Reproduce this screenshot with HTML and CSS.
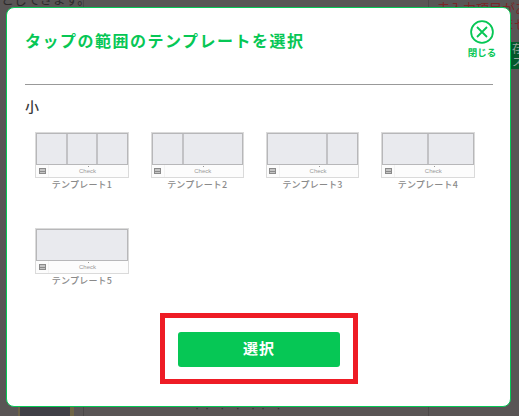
FILE: index.html
```html
<!DOCTYPE html>
<html lang="ja">
<head>
<meta charset="utf-8">
<title>テンプレート選択</title>
<link rel="stylesheet" href="styles.css">
</head>
<body>
<div class="backdrop">
  <div class="bg-left">
    <p class="bg-note">とじてきます。</p>
    <div class="bg-photo"></div>
  </div>
  <div class="bg-center">
    <p class="bg-foot">・・ ・ ・ ・・ ・</p>
  </div>
  <div class="bg-right">
    <p class="bg-alert">未入力項目があります<br>てくださいませ。入力</p>
    <div class="bg-save">存<br>ス</div>
  </div>
</div>
<section class="modal">
  <header class="modal-head">
    <h1 class="modal-title">タップの範囲のテンプレートを選択</h1>
    <button class="close" type="button">
      <svg class="close-icon" viewBox="0 0 24 24" width="24" height="24" aria-hidden="true">
        <circle cx="12" cy="12" r="10.9" fill="none" stroke="#06c755" stroke-width="1.8"/>
        <path d="M7 7 L17 17 M17 7 L7 17" fill="none" stroke="#06c755" stroke-width="1.8"/>
      </svg>
      <span class="close-label">閉じる</span>
    </button>
  </header>
  <h2 class="size-title">小</h2>
  <div class="templates">
    <figure class="template">
      <div class="thumb">
        <div class="cells"><i class="cell"></i><i class="cell"></i><i class="cell"></i></div>
        <div class="bar"><span class="bar-menu"><b class="bar-glyph"></b></span><span class="bar-text">Check</span></div>
      </div>
      <figcaption class="name">テンプレート1</figcaption>
    </figure>
    <figure class="template">
      <div class="thumb">
        <div class="cells"><i class="cell"></i><i class="cell wide"></i></div>
        <div class="bar"><span class="bar-menu"><b class="bar-glyph"></b></span><span class="bar-text">Check</span></div>
      </div>
      <figcaption class="name">テンプレート2</figcaption>
    </figure>
    <figure class="template">
      <div class="thumb">
        <div class="cells"><i class="cell wide"></i><i class="cell"></i></div>
        <div class="bar"><span class="bar-menu"><b class="bar-glyph"></b></span><span class="bar-text">Check</span></div>
      </div>
      <figcaption class="name">テンプレート3</figcaption>
    </figure>
    <figure class="template">
      <div class="thumb">
        <div class="cells"><i class="cell"></i><i class="cell"></i></div>
        <div class="bar"><span class="bar-menu"><b class="bar-glyph"></b></span><span class="bar-text">Check</span></div>
      </div>
      <figcaption class="name">テンプレート4</figcaption>
    </figure>
    <figure class="template">
      <div class="thumb">
        <div class="cells"><i class="cell"></i></div>
        <div class="bar"><span class="bar-menu"><b class="bar-glyph"></b></span><span class="bar-text">Check</span></div>
      </div>
      <figcaption class="name">テンプレート5</figcaption>
    </figure>
  </div>
  <div class="action">
    <div class="highlight">
      <button class="select" type="button">選択</button>
    </div>
  </div>
</section>
</body>
</html>
```
FILE: styles.css
```css
* { box-sizing: border-box; }
html, body { margin: 0; height: 100%; }
body {
  width: 519px;
  height: 416px;
  overflow: hidden;
  position: relative;
  background: #595555;
  font-family: "Noto Sans CJK JP", "Noto Sans", sans-serif;
}
.backdrop {
  height: 416px;
  display: flex;
  justify-content: space-between;
}
.bg-left {
  width: 84px;
  border-right: 1px solid #4b4848;
  display: flex;
  flex-direction: column;
  justify-content: space-between;
}
.bg-note {
  margin: -8px 0 0 0;
  padding-left: 1px;
  font-size: 13px;
  line-height: 14px;
  color: #2b2a2a;
  white-space: nowrap;
}
.bg-photo {
  width: 50px;
  height: 9px;
  margin-left: 20px;
  background: #3f3f46;
  box-shadow: -2px 0 0 #6b6248, 4px 0 0 #6e6445;
}
.bg-center {
  flex: 1;
  padding: 406px 0 0 110px;
  overflow: hidden;
}
.bg-foot {
  margin: 0;
  font-size: 6px;
  line-height: 6px;
  letter-spacing: 4px;
  color: #2b2a2a;
  white-space: nowrap;
}
.bg-right {
  width: 91px;
  border-left: 1px solid #4b4848;
  padding-left: 8px;
  overflow: hidden;
}
.bg-alert {
  margin: 0;
  font-size: 13px;
  line-height: 16px;
  color: #7a2626;
  white-space: nowrap;
}
.bg-save {
  margin: 10px 0 0 -8px;
  padding-left: 83px;
  height: 27px;
  background: #03572b;
  color: #9aa79f;
  font-size: 11px;
  line-height: 13px;
  white-space: nowrap;
}
.modal {
  position: absolute;
  left: 6px;
  top: 7px;
  width: 505px;
  height: 400px;
  background: #fff;
  border: 1px solid #06c755;
  border-radius: 8px;
  padding: 0 17px 0 18px;
}
.modal-head {
  height: 77px;
  display: flex;
  justify-content: space-between;
  align-items: flex-start;
  border-bottom: 1px solid #999;
}
.modal-title {
  margin: 20px 0 0 0;
  font-size: 16px;
  line-height: 24px;
  font-weight: 700;
  letter-spacing: 1.5px;
  color: #06c755;
  white-space: nowrap;
}
.close {
  margin: 12px -4px 0 0;
  padding: 0;
  width: 30px;
  border: 0;
  background: none;
  display: flex;
  flex-direction: column;
  align-items: center;
  gap: 1px;
  font-family: inherit;
}
.close-icon { display: block; }
.close-label {
  font-size: 9.5px;
  line-height: 14px;
  font-weight: 700;
  color: #06c755;
  white-space: nowrap;
}
.size-title {
  margin: 11px 0 0 0;
  font-size: 14px;
  line-height: 20px;
  font-weight: 500;
  color: #3a3a3a;
}
.templates {
  margin-top: 16px;
  padding-left: 10.3px;
  display: grid;
  grid-template-columns: repeat(4, 93.4px);
  grid-auto-rows: 96px;
  column-gap: 21.9px;
}
.template { margin: 0; }
.thumb {
  height: 46px;
  display: flex;
  flex-direction: column;
  background: #fcfcfc;
  border: 1px solid #dadada;
}
.cells {
  height: 32px;
  display: flex;
  background: #e9eaee;
  border: 1px solid #b7b7b9;
}
.cell { flex: 1 1 0; border-left: 2px solid #c2c2c5; }
.cell:first-child { border-left: 0; }
.cell.wide { flex-grow: 2; }
.bar {
  flex: 1;
  display: flex;
  align-items: center;
}
.bar-menu {
  width: 13px;
  height: 100%;
  display: flex;
  align-items: center;
  justify-content: center;
  border-right: 1px solid #f3f3f3;
}
.bar-glyph {
  width: 7px;
  height: 6px;
  border: 1px solid #8a8a8a;
  background: linear-gradient(#8a8a8a, #8a8a8a) center / 100% 1px no-repeat #c4c4c4;
}
.bar-text {
  flex: 1;
  padding-right: 2px;
  text-align: center;
  font-family: "Liberation Sans", sans-serif;
  font-size: 6px;
  line-height: 12px;
  color: #9a9a9a;
  background: radial-gradient(circle, #999 0 0.6px, transparent 0.7px) center 0 / 3px 3px no-repeat;
}
.name {
  margin-top: 1px;
  text-align: center;
  font-size: 9px;
  line-height: 12px;
  font-weight: 500;
  letter-spacing: 0.2px;
  color: #8a8a8a;
  white-space: nowrap;
}
.action {
  position: absolute;
  left: 153px;
  top: 305px;
}
.highlight {
  width: 198px;
  height: 71px;
  border: 5px solid #ee1c25;
  padding: 14px 0 0 13px;
}
.select {
  display: block;
  width: 162px;
  height: 35px;
  padding: 0 0 4px;
  border: 0;
  border-radius: 3px;
  background: #06c755;
  color: #fff;
  font-family: inherit;
  font-size: 15px;
  line-height: 22px;
  font-weight: 700;
  letter-spacing: 1px;
}
```
